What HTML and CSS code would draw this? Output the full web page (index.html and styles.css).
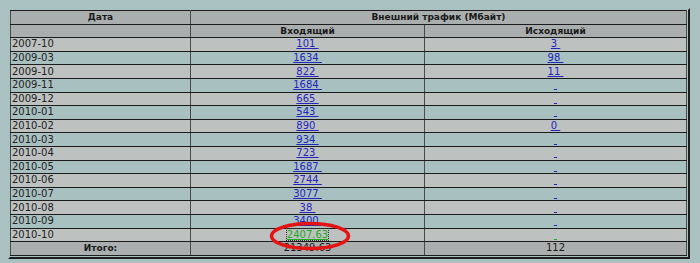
FILE: index.html
```html
<!DOCTYPE html>
<html lang="ru">
<head>
<meta charset="utf-8">
<title>Внешний трафик</title>
<link rel="stylesheet" href="styles.css">
</head>
<body>
<div class="frame">
  <table class="traffic">
    <colgroup>
      <col class="c-date">
      <col class="c-in">
      <col class="c-out">
    </colgroup>
    <thead>
      <tr class="head">
        <th>Дата</th>
        <th colspan="2">Внешний трафик (Мбайт)</th>
      </tr>
      <tr class="head">
        <th></th>
        <th>Входящий</th>
        <th>Исходящий</th>
      </tr>
    </thead>
    <tbody>
      <tr class="odd"><td class="date">2007-10</td><td><a href="#">101&nbsp;</a></td><td><a href="#">3&nbsp;</a></td></tr>
      <tr class="even"><td class="date">2009-03</td><td><a href="#">1634&nbsp;</a></td><td><a href="#">98&nbsp;</a></td></tr>
      <tr class="odd"><td class="date">2009-10</td><td><a href="#">822&nbsp;</a></td><td><a href="#">11&nbsp;</a></td></tr>
      <tr class="even"><td class="date">2009-11</td><td><a href="#">1684&nbsp;</a></td><td><a href="#">&nbsp;</a></td></tr>
      <tr class="odd"><td class="date">2009-12</td><td><a href="#">665&nbsp;</a></td><td><a href="#">&nbsp;</a></td></tr>
      <tr class="even"><td class="date">2010-01</td><td><a href="#">543&nbsp;</a></td><td><a href="#">&nbsp;</a></td></tr>
      <tr class="odd"><td class="date">2010-02</td><td><a href="#">890&nbsp;</a></td><td><a href="#">0&nbsp;</a></td></tr>
      <tr class="even"><td class="date">2010-03</td><td><a href="#">934&nbsp;</a></td><td><a href="#">&nbsp;</a></td></tr>
      <tr class="odd"><td class="date">2010-04</td><td><a href="#">723&nbsp;</a></td><td><a href="#">&nbsp;</a></td></tr>
      <tr class="even"><td class="date">2010-05</td><td><a href="#">1687&nbsp;</a></td><td><a href="#">&nbsp;</a></td></tr>
      <tr class="odd"><td class="date">2010-06</td><td><a href="#">2744&nbsp;</a></td><td><a href="#">&nbsp;</a></td></tr>
      <tr class="even"><td class="date">2010-07</td><td><a href="#">3077&nbsp;</a></td><td><a href="#">&nbsp;</a></td></tr>
      <tr class="odd"><td class="date">2010-08</td><td><a href="#">38&nbsp;</a></td><td><a href="#">&nbsp;</a></td></tr>
      <tr class="even"><td class="date">2010-09</td><td><a href="#">3400&nbsp;</a></td><td><a href="#">&nbsp;</a></td></tr>
      <tr class="odd"><td class="date">2010-10</td><td><a href="#" class="cur focus">2407.63</a></td><td><a href="#" class="cur">&nbsp;</a></td></tr>
    </tbody>
    <tfoot>
      <tr class="total">
        <th>Итого:</th>
        <td>21349.63</td>
        <td>112</td>
      </tr>
    </tfoot>
  </table>
  <svg class="mark" width="82" height="30" viewBox="0 0 82 30" aria-hidden="true">
    <ellipse cx="41" cy="15" rx="38.5" ry="12.5" fill="none" stroke="#e41414" stroke-width="3.6"/>
  </svg>
</div>
</body>
</html>
```

FILE: styles.css
```css
html, body {
  margin: 0;
  padding: 0;
}

body {
  background: #a9c1c1;
  font-family: "DejaVu Sans", Verdana, sans-serif;
  font-size: 10px;
  color: #1a1a1a;
  padding: 8px;
}

.frame {
  position: relative;
  width: 678px;
  border: 2px solid;
  border-color: #a9c1c1 #1e1e1e #1e1e1e #a9c1c1;
  padding: 0 1px 1px 0;
  box-sizing: content-box;
  width: 677px;
}

.traffic {
  width: 677px;
  border-collapse: collapse;
  border: 1px solid #111;
  table-layout: fixed;
}

.c-date { width: 180px; }
.c-in { width: 234px; }

.traffic th,
.traffic td {
  padding: 0 1px;
  height: 12.6px;
  line-height: 12px;
  border-top: 1px solid #1c1c1c;
  border-bottom: 1px solid #1c1c1c;
  border-left: 1px solid #4a4a4a;
  border-right: 1px solid #4a4a4a;
  text-align: center;
  white-space: nowrap;
  vertical-align: middle;
}

.traffic th {
  font-weight: bold;
  font-size: 9px;
}

.head {
  background: #aaaeae;
}

.odd {
  background: #bdc1c0;
}

.even {
  background: #a9c0c0;
}

.total {
  background: #aaaeae;
}

.traffic td.date {
  text-align: left;
  color: #222;
}

.traffic a {
  color: #2424bf;
  text-decoration: underline;
}

.traffic a.cur {
  color: #1faa1f;
}

.traffic a.focus {
  outline: 1px dotted #333;
  outline-offset: 0;
}

.mark {
  position: absolute;
  left: 259px;
  top: 211px;
}
```
